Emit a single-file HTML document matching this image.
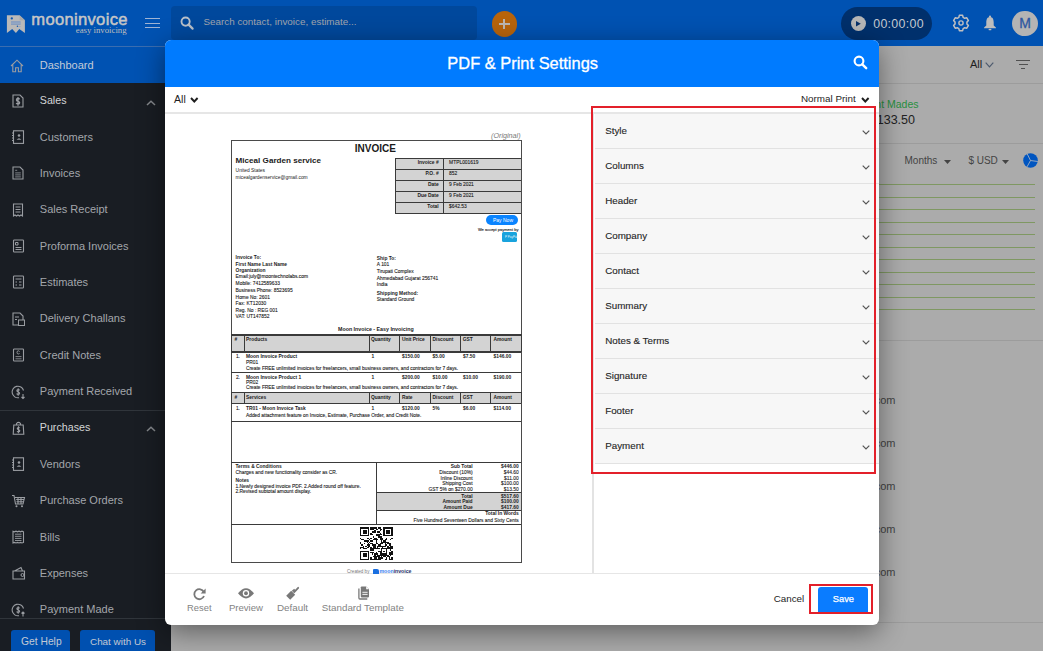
<!DOCTYPE html>
<html><head><meta charset="utf-8">
<title>PDF &amp; Print Settings</title>
<style>
*{box-sizing:border-box;margin:0;padding:0}
html,body{width:1043px;height:651px;overflow:hidden;background:#ababab;font-family:"Liberation Sans",sans-serif;position:relative}
.a{position:absolute}
.t{position:absolute;white-space:nowrap}
svg{position:absolute;overflow:visible}
</style></head><body>

<div class="a" style="left:0px;top:0px;width:1043px;height:46px;background:#0052b2;"></div>
<div class="a" style="left:0px;top:46px;width:171px;height:1px;background:#3a6db0;"></div>
<svg style="left:3px;top:10px" width="28" height="28" viewBox="0 0 28 28">
 <path d="M3.9 5.2 H16.6 L21.9 10.3 V23 L16.3 18.9 L12.9 23 L9.2 18.9 L3.9 23 Z" fill="#b9b9b9"/>
 <path d="M16.6 5.2 V10.3 H21.9 Z" fill="#a9a9a9"/>
 <circle cx="8.8" cy="8.4" r="1.15" fill="#0e56b0"/>
 <rect x="8" y="11.3" width="9.6" height="3.5" fill="#7e98c0"/>
 <rect x="8" y="12.6" width="9.6" height="0.9" fill="#a8b4c6"/>
 <circle cx="14.4" cy="16.3" r="0.7" fill="#0e56b0"/>
 <rect x="15.3" y="16.1" width="2.3" height="0.5" fill="#7e98c0"/>
</svg>
<div class="t" style="left:31.30px;top:9.26px;font-size:16.6px;line-height:21.58px;color:#c6c6c6;font-weight:normal;font-family:'Liberation Sans',sans-serif;-webkit-text-stroke:0.5px #c6c6c6;letter-spacing:0.3px">mooninvoice</div>
<div class="t" style="left:75.80px;top:24.88px;font-size:8.75px;line-height:11.38px;color:#bdbdbd;font-weight:normal;font-family:'Liberation Serif',serif;">easy invoicing</div>
<div class="a" style="left:145px;top:18.2px;width:15px;height:1.3px;background:#9fb4d4;"></div>
<div class="a" style="left:145px;top:22.7px;width:15px;height:1.3px;background:#9fb4d4;"></div>
<div class="a" style="left:145px;top:27.2px;width:15px;height:1.3px;background:#9fb4d4;"></div>
<div class="a" style="left:171px;top:6px;width:306px;height:34px;background:#00489c;border-radius:4px"></div>
<svg style="left:179.8px;top:16.4px" width="14" height="14" viewBox="0 0 14 14"><circle cx="5.6" cy="5.6" r="4.1" fill="none" stroke="#b9c0c9" stroke-width="1.9"/><path d="M8.6 8.6 L12.6 12.6" stroke="#b9c0c9" stroke-width="2.2" stroke-linecap="round"/></svg>
<div class="t" style="left:203.40px;top:16.43px;font-size:9.9px;line-height:12.87px;color:#a0a5ad;font-weight:normal;font-family:'Liberation Sans',sans-serif;">Search contact, invoice, estimate...</div>
<div class="a" style="left:491.6px;top:11.1px;width:25.4px;height:25.6px;border-radius:50%;background:#b8640b"></div>
<div class="a" style="left:499px;top:22.6px;width:10.8px;height:2.2px;background:#bcb6b0;"></div>
<div class="a" style="left:503.3px;top:18.5px;width:2.2px;height:10.5px;background:#bcb6b0;"></div>
<div class="a" style="left:840.5px;top:7px;width:91.5px;height:33px;border-radius:17px;background:#00306c"></div>
<div class="a" style="left:850.7px;top:16px;width:15px;height:15px;border-radius:50%;background:#b6b6b6"></div>
<svg style="left:856.4px;top:21.1px" width="5" height="5.4" viewBox="0 0 5 5.4"><path d="M0 0 L4.8 2.7 L0 5.4 Z" fill="#06306a"/></svg>
<div class="t" style="left:873.20px;top:16.04px;font-size:12.4px;line-height:16.12px;color:#c4c9d0;font-weight:normal;font-family:'Liberation Sans',sans-serif;letter-spacing:0.3px">00:00:00</div>
<svg style="left:952px;top:14px" width="18" height="18" viewBox="0 0 18 18"><path d="M6.79 3.42 L7.38 1.37 L10.62 1.37 L11.21 3.42 L12.73 4.30 L14.80 3.78 L16.42 6.59 L14.94 8.12 L14.94 9.88 L16.42 11.41 L14.80 14.22 L12.73 13.70 L11.21 14.58 L10.62 16.63 L7.38 16.63 L6.79 14.58 L5.27 13.70 L3.20 14.22 L1.58 11.41 L3.06 9.88 L3.06 8.12 L1.58 6.59 L3.20 3.78 L5.27 4.30Z" fill="none" stroke="#c0c0c2" stroke-width="1.5" stroke-linejoin="round"/><circle cx="9" cy="9" r="2.1" fill="none" stroke="#c0c0c2" stroke-width="1.4"/></svg>
<svg style="left:982.7px;top:15px" width="14" height="16" viewBox="0 0 14 16"><circle cx="7" cy="1.7" r="1.1" fill="#bdbdbd"/><path d="M7 1.9 C3.9 1.9 3.3 5 3.3 7.5 V10.6 L1.1 12.5 V13.2 H12.9 V12.5 L10.7 10.6 V7.5 C10.7 5 10.1 1.9 7 1.9Z" fill="#bdbdbd"/><ellipse cx="7" cy="14.5" rx="1.5" ry="0.85" fill="#bdbdbd"/></svg>
<div class="a" style="left:1012.3px;top:10.7px;width:25.6px;height:25.6px;border-radius:50%;background:#b4b4b4"></div>
<div class="t" style="left:1012px;top:15px;width:26px;text-align:center;font-size:14px;line-height:17px;color:#2f57a0;-webkit-text-stroke:0.3px #2f57a0">M</div>
<div class="a" style="left:0px;top:47px;width:171px;height:604px;background:#191d23;"></div>
<div class="a" style="left:0px;top:47px;width:171px;height:36px;background:#0052b2;"></div>
<div class="a" style="left:0px;top:410px;width:171px;height:1px;background:#30353b;"></div>
<div class="a" style="left:0px;top:618px;width:171px;height:1px;background:#30353b;"></div>
<div class="t" style="left:39.80px;top:58.04px;font-size:11px;line-height:14.30px;color:#c3cbd7;font-weight:normal;font-family:'Liberation Sans',sans-serif;">Dashboard</div>
<svg style="left:10.0px;top:58.5px" width="14" height="14" viewBox="0 0 14 14"><path d="M1 7 L7 1.2 L13 7 M2.8 5.5 V12.8 H5.6 V8.8 H8.4 V12.8 H11.2 V5.5" fill="none" stroke="#9a9da2" stroke-width="1.1" stroke="#c6ccd6"/></svg>
<div class="t" style="left:39.80px;top:93.84px;font-size:10.7px;line-height:13.91px;color:#d4d5d7;font-weight:normal;font-family:'Liberation Sans',sans-serif;">Sales</div>
<svg style="left:11.5px;top:94.0px" width="14" height="14" viewBox="0 0 14 14"><path d="M1 1 H8 L11 4 V13 H1 Z" fill="none" stroke="#9a9da2" stroke-width="1.1"/><path d="M7.58 5.38 Q7.31 4.50 6.00 4.50 Q4.42 4.50 4.42 5.90 Q4.42 6.95 6.00 7.30 Q7.66 7.65 7.66 8.79 Q7.66 10.10 6.00 10.10 Q4.60 10.10 4.25 9.05 M6.00 2.92 V11.68" fill="none" stroke="#9a9da2" stroke-width="1.3"/></svg>
<svg style="left:145.5px;top:99.5px" width="10" height="6" viewBox="0 0 10 6"><path d="M1 5 L5 1.2 L9 5" fill="none" stroke="#85888c" stroke-width="1.5"/></svg>
<div class="t" style="left:39.80px;top:129.54px;font-size:11px;line-height:14.30px;color:#a3a6ab;font-weight:normal;font-family:'Liberation Sans',sans-serif;">Customers</div>
<svg style="left:11.5px;top:130.0px" width="14" height="14" viewBox="0 0 14 14"><rect x="1.5" y="0.8" width="10" height="12.6" fill="none" stroke="#9a9da2" stroke-width="1.1"/><path d="M0 3 H2 M0 5.5 H2 M0 8 H2 M0 10.5 H2" stroke="#9a9da2" stroke-width="1"/><circle cx="7" cy="5.5" r="1.3" fill="#9a9da2"/><path d="M4.6 9.8 Q7 6.8 9.4 9.8Z" fill="#9a9da2"/></svg>
<div class="t" style="left:39.80px;top:165.91px;font-size:11px;line-height:14.30px;color:#a3a6ab;font-weight:normal;font-family:'Liberation Sans',sans-serif;">Invoices</div>
<svg style="left:11.5px;top:166.37px" width="14" height="14" viewBox="0 0 14 14"><path d="M1 1 H8 L11 4 V13 H1 Z" fill="none" stroke="#9a9da2" stroke-width="1.1"/><path d="M3.2 4.3 H5.2 M3.2 6.9 H8.8 M3.2 8.9 H8.8 M3.2 10.9 H8.8" stroke="#9a9da2" stroke-width="0.8"/></svg>
<div class="t" style="left:39.80px;top:202.28px;font-size:11px;line-height:14.30px;color:#a3a6ab;font-weight:normal;font-family:'Liberation Sans',sans-serif;">Sales Receipt</div>
<svg style="left:11.5px;top:202.74px" width="14" height="14" viewBox="0 0 14 14"><path d="M1.5 1 H10.5 V13 L9 12 L7.5 13 L6 12 L4.5 13 L3 12 L1.5 13 Z" fill="none" stroke="#9a9da2" stroke-width="1.1"/><path d="M3.5 4 H8.5 M3.5 6.5 H8.5 M3.5 9 H8.5" stroke="#9a9da2" stroke-width="1"/></svg>
<div class="t" style="left:39.80px;top:238.65px;font-size:11px;line-height:14.30px;color:#a3a6ab;font-weight:normal;font-family:'Liberation Sans',sans-serif;">Proforma Invoices</div>
<svg style="left:11.5px;top:239.10999999999999px" width="14" height="14" viewBox="0 0 14 14"><rect x="1.5" y="1" width="10" height="12" rx="0.8" fill="none" stroke="#9a9da2" stroke-width="1.1"/><path d="M3.5 3.5 H6 V6 H3.5Z M3.5 8.5 H9.5 M3.5 10.5 H9.5" stroke="#9a9da2" stroke-width="1" fill="none"/></svg>
<div class="t" style="left:39.80px;top:275.02px;font-size:11px;line-height:14.30px;color:#a3a6ab;font-weight:normal;font-family:'Liberation Sans',sans-serif;">Estimates</div>
<svg style="left:11.5px;top:275.48px" width="14" height="14" viewBox="0 0 14 14"><rect x="1.5" y="1" width="10" height="12" rx="0.8" fill="none" stroke="#9a9da2" stroke-width="1.1"/><path d="M3.5 4 H9.5 M3.5 7 H5 M7 7 H9.5 M3.5 10 H5 M7 10 H9.5" stroke="#9a9da2" stroke-width="1"/></svg>
<div class="t" style="left:39.80px;top:311.39px;font-size:11px;line-height:14.30px;color:#a3a6ab;font-weight:normal;font-family:'Liberation Sans',sans-serif;">Delivery Challans</div>
<svg style="left:11.5px;top:311.85px" width="14" height="14" viewBox="0 0 14 14"><path d="M1 1 H8 L11 4 V13 H1 Z" fill="none" stroke="#9a9da2" stroke-width="1.1"/><rect x="6.5" y="8" width="6" height="5.5" fill="#1a1e23" stroke="#9a9da2" stroke-width="1"/><path d="M3 5 H7 M3 7.5 H5" stroke="#9a9da2" stroke-width="1"/></svg>
<div class="t" style="left:39.80px;top:347.76px;font-size:11px;line-height:14.30px;color:#a3a6ab;font-weight:normal;font-family:'Liberation Sans',sans-serif;">Credit Notes</div>
<svg style="left:11.5px;top:348.21999999999997px" width="14" height="14" viewBox="0 0 14 14"><rect x="1.5" y="1" width="10" height="12" rx="0.8" fill="none" stroke="#9a9da2" stroke-width="1.1"/><path d="M7.6 3.6 Q7.2 2.8 6.4 2.8 Q5 2.8 5 4.4 Q5 6 6.4 6 Q7.2 6 7.6 5.2" fill="none" stroke="#9a9da2" stroke-width="0.9"/><path d="M3.5 8.6 H9.5 M3.5 10.8 H9.5" stroke="#9a9da2" stroke-width="0.8"/></svg>
<div class="t" style="left:39.80px;top:384.13px;font-size:11px;line-height:14.30px;color:#a3a6ab;font-weight:normal;font-family:'Liberation Sans',sans-serif;">Payment Received</div>
<svg style="left:11.5px;top:384.59px" width="14" height="14" viewBox="0 0 14 14"><path d="M11.5 5.5 A5.8 5.8 0 1 0 7 12.7" fill="none" stroke="#9a9da2" stroke-width="1.1"/><path d="M7.55 5.35 Q7.33 4.60 6.20 4.60 Q4.85 4.60 4.85 5.80 Q4.85 6.70 6.20 7.00 Q7.62 7.30 7.62 8.28 Q7.62 9.40 6.20 9.40 Q5.00 9.40 4.70 8.50 M6.20 3.25 V10.75" fill="none" stroke="#9a9da2" stroke-width="1.1"/><path d="M11 9 V13.5 M9.5 12 L11 13.5 L12.5 12" fill="none" stroke="#9a9da2" stroke-width="1.1"/></svg>
<div class="t" style="left:39.80px;top:420.80px;font-size:10.7px;line-height:13.91px;color:#d4d5d7;font-weight:normal;font-family:'Liberation Sans',sans-serif;">Purchases</div>
<svg style="left:11.5px;top:420.96px" width="14" height="14" viewBox="0 0 14 14"><path d="M1.8 4 H11.2 L11.8 13.2 H1.2 Z M4.5 4 V2.5 Q6.5 0.2 8.5 2.5 V4" fill="none" stroke="#9a9da2" stroke-width="1.1"/><path d="M7.74 7.19 Q7.53 6.50 6.50 6.50 Q5.26 6.50 5.26 7.60 Q5.26 8.42 6.50 8.70 Q7.81 8.97 7.81 9.87 Q7.81 10.90 6.50 10.90 Q5.40 10.90 5.12 10.07 M6.50 5.26 V12.14" fill="none" stroke="#9a9da2" stroke-width="1.1"/></svg>
<svg style="left:145.5px;top:426.46px" width="10" height="6" viewBox="0 0 10 6"><path d="M1 5 L5 1.2 L9 5" fill="none" stroke="#85888c" stroke-width="1.5"/></svg>
<div class="t" style="left:39.80px;top:456.87px;font-size:11px;line-height:14.30px;color:#a3a6ab;font-weight:normal;font-family:'Liberation Sans',sans-serif;">Vendors</div>
<svg style="left:11.5px;top:457.33px" width="14" height="14" viewBox="0 0 14 14"><rect x="1.5" y="0.8" width="10" height="12.6" fill="none" stroke="#9a9da2" stroke-width="1.1"/><path d="M0 3 H2 M0 5.5 H2 M0 8 H2 M0 10.5 H2" stroke="#9a9da2" stroke-width="1"/><circle cx="7" cy="5.5" r="1.3" fill="#9a9da2"/><path d="M4.6 9.8 Q7 6.8 9.4 9.8Z" fill="#9a9da2"/></svg>
<div class="t" style="left:39.80px;top:493.24px;font-size:11px;line-height:14.30px;color:#a3a6ab;font-weight:normal;font-family:'Liberation Sans',sans-serif;">Purchase Orders</div>
<svg style="left:11.5px;top:493.7px" width="14" height="14" viewBox="0 0 14 14"><path d="M0 1.5 H2 L3.5 10 H11 L12.5 3.5 H3 M4.2 5.5 H12 M4.5 7.8 H11.5 M6 3.5 V10 M9 3.5 V10" fill="none" stroke="#9a9da2" stroke-width="1.1"/><circle cx="4.5" cy="12.3" r="1" fill="#9a9da2"/><circle cx="10" cy="12.3" r="1" fill="#9a9da2"/></svg>
<div class="t" style="left:39.80px;top:529.61px;font-size:11px;line-height:14.30px;color:#a3a6ab;font-weight:normal;font-family:'Liberation Sans',sans-serif;">Bills</div>
<svg style="left:11.5px;top:530.0699999999999px" width="14" height="14" viewBox="0 0 14 14"><path d="M1 1.2 L2.5 1.8 L4 1.2 L5.5 1.8 L7 1.2 L8.5 1.8 L10 1.2 L11.5 1.8 V12.4 L10 13 L8.5 12.4 L7 13 L5.5 12.4 L4 13 L2.5 12.4 L1 13 Z" fill="none" stroke="#9a9da2" stroke-width="1.1"/><path d="M3 4.2 H9.5 M3 6.3 H9.5 M3 8.4 H9.5 M3 10.5 H9.5" stroke="#9a9da2" stroke-width="0.9"/></svg>
<div class="t" style="left:39.80px;top:565.98px;font-size:11px;line-height:14.30px;color:#a3a6ab;font-weight:normal;font-family:'Liberation Sans',sans-serif;">Expenses</div>
<svg style="left:11.5px;top:566.4399999999999px" width="14" height="14" viewBox="0 0 14 14"><path d="M1 5 H12.5 V13 H1 Z M2.5 5 L9 1.5 L10.5 5" fill="none" stroke="#9a9da2" stroke-width="1.1"/><circle cx="10.5" cy="9" r="1.5" fill="none" stroke="#9a9da2" stroke-width="1"/></svg>
<div class="t" style="left:39.80px;top:602.35px;font-size:11px;line-height:14.30px;color:#a3a6ab;font-weight:normal;font-family:'Liberation Sans',sans-serif;">Payment Made</div>
<svg style="left:11.5px;top:602.81px" width="14" height="14" viewBox="0 0 14 14"><path d="M11.5 5.5 A5.8 5.8 0 1 0 7 12.7" fill="none" stroke="#9a9da2" stroke-width="1.1"/><path d="M7.55 5.35 Q7.33 4.60 6.20 4.60 Q4.85 4.60 4.85 5.80 Q4.85 6.70 6.20 7.00 Q7.62 7.30 7.62 8.28 Q7.62 9.40 6.20 9.40 Q5.00 9.40 4.70 8.50 M6.20 3.25 V10.75" fill="none" stroke="#9a9da2" stroke-width="1.1"/><path d="M11 13.5 V9 M9.5 10.5 L11 9 L12.5 10.5" fill="none" stroke="#9a9da2" stroke-width="1.1"/></svg>
<div class="a" style="left:11px;top:629.6px;width:59px;height:30px;border-radius:3px;background:#0050b0"></div>
<div class="t" style="left:21.00px;top:635.14px;font-size:10.3px;line-height:13.39px;color:#c2c9d4;font-weight:normal;font-family:'Liberation Sans',sans-serif;">Get Help</div>
<div class="a" style="left:80.4px;top:629.6px;width:75px;height:30px;border-radius:3px;background:#0050b0"></div>
<div class="t" style="left:90.00px;top:635.53px;font-size:9.9px;line-height:12.87px;color:#c2c9d4;font-weight:normal;font-family:'Liberation Sans',sans-serif;">Chat with Us</div>
<div class="a" style="left:171px;top:83px;width:872px;height:1px;background:#9c9c9c;"></div>
<div class="t" style="left:970.00px;top:57.04px;font-size:11px;line-height:14.30px;color:#1e1e1e;font-weight:normal;font-family:'Liberation Sans',sans-serif;">All</div>
<svg style="left:985px;top:62px" width="9" height="6" viewBox="0 0 9 6"><path d="M0.7 0.7 L4.5 4.8 L8.3 0.7" fill="none" stroke="#4d5a6e" stroke-width="1.2"/></svg>
<div class="a" style="left:1016px;top:60px;width:14px;height:1.4px;background:#505050;"></div>
<div class="a" style="left:1018.5px;top:64px;width:9px;height:1.4px;background:#505050;"></div>
<div class="a" style="left:1021px;top:68px;width:4px;height:1.4px;background:#505050;"></div>
<div class="t" style="right:124.50px;top:97.74px;font-size:10.5px;line-height:13.65px;color:#28903f;font-weight:normal;">Payment Mades</div>
<div class="t" style="right:128.00px;top:112.14px;font-size:12.5px;line-height:16.25px;color:#222;font-weight:normal;">$ 5133.50</div>
<div class="a" style="left:171px;top:143px;width:872px;height:1px;background:#9c9c9c;"></div>
<div class="t" style="left:904.50px;top:153.84px;font-size:10px;line-height:13.00px;color:#444;font-weight:normal;font-family:'Liberation Sans',sans-serif;">Months</div>
<svg style="left:944px;top:159.5px" width="7" height="4" viewBox="0 0 7 4"><path d="M0 0 H7 L3.5 4Z" fill="#444"/></svg>
<div class="t" style="left:968.40px;top:153.84px;font-size:10px;line-height:13.00px;color:#444;font-weight:normal;font-family:'Liberation Sans',sans-serif;">$ USD</div>
<svg style="left:1002px;top:159.5px" width="7" height="4" viewBox="0 0 7 4"><path d="M0 0 H7 L3.5 4Z" fill="#444"/></svg>
<svg style="left:1022.7px;top:153.3px" width="15" height="15" viewBox="0 0 15 15"><circle cx="7.5" cy="7.5" r="7.3" fill="#0055c0"/><path d="M7.5 7.5 L4.2 0.9 M7.5 7.5 L14.8 8.5 M7.5 7.5 L4 13.9" stroke="#a4b0c2" stroke-width="0.9"/></svg>
<div class="a" style="left:171px;top:184.0px;width:864px;height:1px;background:#7f9862;"></div>
<div class="a" style="left:171px;top:196.5px;width:864px;height:1px;background:#7f9862;"></div>
<div class="a" style="left:171px;top:209.0px;width:864px;height:1px;background:#7f9862;"></div>
<div class="a" style="left:171px;top:221.5px;width:864px;height:1px;background:#7f9862;"></div>
<div class="a" style="left:171px;top:234.0px;width:864px;height:1px;background:#7f9862;"></div>
<div class="a" style="left:171px;top:246.5px;width:864px;height:1px;background:#7f9862;"></div>
<div class="a" style="left:171px;top:259.0px;width:864px;height:1px;background:#7f9862;"></div>
<div class="a" style="left:171px;top:271.5px;width:864px;height:1px;background:#7f9862;"></div>
<div class="a" style="left:171px;top:284.0px;width:864px;height:1px;background:#7f9862;"></div>
<div class="a" style="left:171px;top:296.5px;width:864px;height:1px;background:#7f9862;"></div>
<div class="a" style="left:171px;top:309.0px;width:864px;height:1px;background:#7f9862;"></div>
<div class="a" style="left:171px;top:340px;width:872px;height:1px;background:#9c9c9c;"></div>
<div class="t" style="right:147.50px;top:393.04px;font-size:11px;line-height:14.30px;color:#444444;font-weight:normal;">gmail.com</div>
<div class="t" style="right:147.50px;top:436.04px;font-size:11px;line-height:14.30px;color:#444444;font-weight:normal;">gmail.com</div>
<div class="t" style="right:147.50px;top:479.04px;font-size:11px;line-height:14.30px;color:#444444;font-weight:normal;">gmail.com</div>
<div class="t" style="right:147.50px;top:522.04px;font-size:11px;line-height:14.30px;color:#444444;font-weight:normal;">gmail.com</div>
<div class="t" style="right:147.50px;top:565.04px;font-size:11px;line-height:14.30px;color:#444444;font-weight:normal;">gmail.com</div>
<div class="a" style="left:171px;top:622px;width:872px;height:1px;background:#9c9c9c;"></div>
<div class="a" style="left:165px;top:40px;width:714px;height:585px;background:#fff;border-radius:6px;box-shadow:0 7px 28px rgba(0,0,0,.45)"></div>
<div class="a" style="left:165px;top:40px;width:714px;height:46.5px;background:#007bff;border-radius:6px 6px 0 0"></div>
<div class="t" style="left:447.30px;top:52.91px;font-size:16.45px;line-height:21.39px;color:#ffffff;font-weight:normal;font-family:'Liberation Sans',sans-serif;-webkit-text-stroke:0.3px #fff">PDF &amp; Print Settings</div>
<svg style="left:853px;top:55px" width="15" height="15" viewBox="0 0 15 15"><circle cx="6" cy="6" r="4.4" fill="none" stroke="#fff" stroke-width="2.1"/><path d="M9.3 9.3 L13.2 13.2" stroke="#fff" stroke-width="2.4" stroke-linecap="round"/></svg>
<div class="t" style="left:174.10px;top:92.74px;font-size:10.5px;line-height:13.65px;color:#1e1e1e;font-weight:normal;font-family:'Liberation Sans',sans-serif;">All</div>
<svg style="left:189.5px;top:96.5px" width="9" height="6" viewBox="0 0 9 6"><path d="M1 1 L4.3 4.5 L7.6 1" fill="none" stroke="#1e1e1e" stroke-width="1.9"/></svg>
<div class="t" style="left:801.00px;top:93.38px;font-size:9.85px;line-height:12.80px;color:#1e1e1e;font-weight:normal;font-family:'Liberation Sans',sans-serif;">Normal Print</div>
<svg style="left:860.5px;top:97px" width="9" height="6" viewBox="0 0 9 6"><path d="M1 1 L4.3 4.5 L7.6 1" fill="none" stroke="#1e1e1e" stroke-width="1.9"/></svg>
<div class="a" style="left:165px;top:112.3px;width:714px;height:1.5px;background:#e6e6e6;"></div>
<div class="a" style="left:592.2px;top:113px;width:1.5px;height:460px;background:#e3e3e3;"></div>
<div class="a" style="left:594.5px;top:113.5px;width:284.5px;height:34px;background:#f7f7f7;"></div>
<div class="a" style="left:594.5px;top:147.5px;width:284.5px;height:1.3px;background:#e2e2e2;"></div>
<div class="t" style="left:605.20px;top:124.73px;font-size:9.8px;line-height:12.74px;color:#262626;font-weight:normal;font-family:'Liberation Sans',sans-serif;-webkit-text-stroke:0.12px #262626">Style</div>
<svg style="left:862px;top:130.0px" width="8" height="5" viewBox="0 0 8 5"><path d="M0.7 0.7 L4 4 L7.3 0.7" fill="none" stroke="#555" stroke-width="1.2"/></svg>
<div class="a" style="left:594.5px;top:148.5px;width:284.5px;height:34px;background:#f7f7f7;"></div>
<div class="a" style="left:594.5px;top:182.5px;width:284.5px;height:1.3px;background:#e2e2e2;"></div>
<div class="t" style="left:605.20px;top:159.73px;font-size:9.8px;line-height:12.74px;color:#262626;font-weight:normal;font-family:'Liberation Sans',sans-serif;-webkit-text-stroke:0.12px #262626">Columns</div>
<svg style="left:862px;top:165.0px" width="8" height="5" viewBox="0 0 8 5"><path d="M0.7 0.7 L4 4 L7.3 0.7" fill="none" stroke="#555" stroke-width="1.2"/></svg>
<div class="a" style="left:594.5px;top:183.5px;width:284.5px;height:34px;background:#f7f7f7;"></div>
<div class="a" style="left:594.5px;top:217.5px;width:284.5px;height:1.3px;background:#e2e2e2;"></div>
<div class="t" style="left:605.20px;top:194.73px;font-size:9.8px;line-height:12.74px;color:#262626;font-weight:normal;font-family:'Liberation Sans',sans-serif;-webkit-text-stroke:0.12px #262626">Header</div>
<svg style="left:862px;top:200.0px" width="8" height="5" viewBox="0 0 8 5"><path d="M0.7 0.7 L4 4 L7.3 0.7" fill="none" stroke="#555" stroke-width="1.2"/></svg>
<div class="a" style="left:594.5px;top:218.5px;width:284.5px;height:34px;background:#f7f7f7;"></div>
<div class="a" style="left:594.5px;top:252.5px;width:284.5px;height:1.3px;background:#e2e2e2;"></div>
<div class="t" style="left:605.20px;top:229.73px;font-size:9.8px;line-height:12.74px;color:#262626;font-weight:normal;font-family:'Liberation Sans',sans-serif;-webkit-text-stroke:0.12px #262626">Company</div>
<svg style="left:862px;top:235.0px" width="8" height="5" viewBox="0 0 8 5"><path d="M0.7 0.7 L4 4 L7.3 0.7" fill="none" stroke="#555" stroke-width="1.2"/></svg>
<div class="a" style="left:594.5px;top:253.5px;width:284.5px;height:34px;background:#f7f7f7;"></div>
<div class="a" style="left:594.5px;top:287.5px;width:284.5px;height:1.3px;background:#e2e2e2;"></div>
<div class="t" style="left:605.20px;top:264.73px;font-size:9.8px;line-height:12.74px;color:#262626;font-weight:normal;font-family:'Liberation Sans',sans-serif;-webkit-text-stroke:0.12px #262626">Contact</div>
<svg style="left:862px;top:270.0px" width="8" height="5" viewBox="0 0 8 5"><path d="M0.7 0.7 L4 4 L7.3 0.7" fill="none" stroke="#555" stroke-width="1.2"/></svg>
<div class="a" style="left:594.5px;top:288.5px;width:284.5px;height:34px;background:#f7f7f7;"></div>
<div class="a" style="left:594.5px;top:322.5px;width:284.5px;height:1.3px;background:#e2e2e2;"></div>
<div class="t" style="left:605.20px;top:299.73px;font-size:9.8px;line-height:12.74px;color:#262626;font-weight:normal;font-family:'Liberation Sans',sans-serif;-webkit-text-stroke:0.12px #262626">Summary</div>
<svg style="left:862px;top:305.0px" width="8" height="5" viewBox="0 0 8 5"><path d="M0.7 0.7 L4 4 L7.3 0.7" fill="none" stroke="#555" stroke-width="1.2"/></svg>
<div class="a" style="left:594.5px;top:323.5px;width:284.5px;height:34px;background:#f7f7f7;"></div>
<div class="a" style="left:594.5px;top:357.5px;width:284.5px;height:1.3px;background:#e2e2e2;"></div>
<div class="t" style="left:605.20px;top:334.73px;font-size:9.8px;line-height:12.74px;color:#262626;font-weight:normal;font-family:'Liberation Sans',sans-serif;-webkit-text-stroke:0.12px #262626">Notes &amp; Terms</div>
<svg style="left:862px;top:340.0px" width="8" height="5" viewBox="0 0 8 5"><path d="M0.7 0.7 L4 4 L7.3 0.7" fill="none" stroke="#555" stroke-width="1.2"/></svg>
<div class="a" style="left:594.5px;top:358.5px;width:284.5px;height:34px;background:#f7f7f7;"></div>
<div class="a" style="left:594.5px;top:392.5px;width:284.5px;height:1.3px;background:#e2e2e2;"></div>
<div class="t" style="left:605.20px;top:369.73px;font-size:9.8px;line-height:12.74px;color:#262626;font-weight:normal;font-family:'Liberation Sans',sans-serif;-webkit-text-stroke:0.12px #262626">Signature</div>
<svg style="left:862px;top:375.0px" width="8" height="5" viewBox="0 0 8 5"><path d="M0.7 0.7 L4 4 L7.3 0.7" fill="none" stroke="#555" stroke-width="1.2"/></svg>
<div class="a" style="left:594.5px;top:393.5px;width:284.5px;height:34px;background:#f7f7f7;"></div>
<div class="a" style="left:594.5px;top:427.5px;width:284.5px;height:1.3px;background:#e2e2e2;"></div>
<div class="t" style="left:605.20px;top:404.73px;font-size:9.8px;line-height:12.74px;color:#262626;font-weight:normal;font-family:'Liberation Sans',sans-serif;-webkit-text-stroke:0.12px #262626">Footer</div>
<svg style="left:862px;top:410.0px" width="8" height="5" viewBox="0 0 8 5"><path d="M0.7 0.7 L4 4 L7.3 0.7" fill="none" stroke="#555" stroke-width="1.2"/></svg>
<div class="a" style="left:594.5px;top:428.5px;width:284.5px;height:34px;background:#f7f7f7;"></div>
<div class="a" style="left:594.5px;top:462.5px;width:284.5px;height:1.3px;background:#e2e2e2;"></div>
<div class="t" style="left:605.20px;top:439.73px;font-size:9.8px;line-height:12.74px;color:#262626;font-weight:normal;font-family:'Liberation Sans',sans-serif;-webkit-text-stroke:0.12px #262626">Payment</div>
<svg style="left:862px;top:445.0px" width="8" height="5" viewBox="0 0 8 5"><path d="M0.7 0.7 L4 4 L7.3 0.7" fill="none" stroke="#555" stroke-width="1.2"/></svg>
<div class="a" style="left:590.8px;top:106.3px;width:285.5px;height:368px;border:2px solid #e3202a"></div>
<div class="a" style="left:165px;top:572.8px;width:714px;height:1.3px;background:#e6e6e6;"></div>
<svg style="left:192.5px;top:587.5px" width="13" height="12" viewBox="0 0 13 12"><path d="M10.8 4 A5 5 0 1 0 11 8" fill="none" stroke="#787878" stroke-width="1.8"/><path d="M12.6 0.5 V5.5 H7.6 Z" fill="#787878"/></svg>
<div class="t" style="left:187.10px;top:601.63px;font-size:9.4px;line-height:12.22px;color:#838383;font-weight:normal;font-family:'Liberation Sans',sans-serif;">Reset</div>
<svg style="left:238px;top:588px" width="16" height="11" viewBox="0 0 16 11"><path d="M0 5.25 Q8 -5 16 5.25 Q8 15.5 0 5.25Z" fill="#787878"/><circle cx="8" cy="5.25" r="3.2" fill="#fff"/><circle cx="8" cy="5.25" r="1.9" fill="#787878"/></svg>
<div class="t" style="left:228.90px;top:602.03px;font-size:9.6px;line-height:12.48px;color:#838383;font-weight:normal;font-family:'Liberation Sans',sans-serif;">Preview</div>
<svg style="left:285.8px;top:586.5px" width="13" height="13" viewBox="0 0 13 13"><path d="M12.2 0.8 L8.2 5.2" stroke="#787878" stroke-width="1.8" stroke-linecap="round"/><path d="M5.2 3.8 L9.2 7.8 L4.2 12.8 L0.2 8.8 Z" fill="#787878"/><path d="M6.5 4.5 L8.8 2.5" stroke="#787878" stroke-width="2"/></svg>
<div class="t" style="left:276.90px;top:601.78px;font-size:9.85px;line-height:12.80px;color:#838383;font-weight:normal;font-family:'Liberation Sans',sans-serif;">Default</div>
<svg style="left:357.8px;top:586px" width="12" height="14" viewBox="0 0 12 14"><path d="M0.9 2.6 V12 Q0.9 13 1.9 13 H9.3" fill="none" stroke="#787878" stroke-width="1.3"/><path d="M3.6 0.4 H8.2 L11 3.2 V10.6 Q11 11.4 10.2 11.4 H3.6 Q2.8 11.4 2.8 10.6 V1.2 Q2.8 0.4 3.6 0.4 Z" fill="#787878"/><path d="M8.2 0.6 V3.2 H10.8" fill="#fff"/><path d="M4.4 6.3 H9.6 M4.4 8.4 H9.6" stroke="#fff" stroke-width="0.9"/></svg>
<div class="t" style="left:321.80px;top:601.83px;font-size:9.8px;line-height:12.74px;color:#838383;font-weight:normal;font-family:'Liberation Sans',sans-serif;">Standard Template</div>
<div class="t" style="left:773.70px;top:592.83px;font-size:9.8px;line-height:12.74px;color:#222;font-weight:normal;font-family:'Liberation Sans',sans-serif;">Cancel</div>
<div class="a" style="left:818.2px;top:586.8px;width:49.8px;height:25px;background:#0a7cff;border-radius:3px 3px 0 0"></div>
<div class="a" style="left:808.8px;top:583.6px;width:64.5px;height:30px;border:2px solid #e3202a"></div>
<div class="t" style="left:832.80px;top:593.33px;font-size:9.3px;line-height:12.09px;color:#ffffff;font-weight:normal;font-family:'Liberation Sans',sans-serif;-webkit-text-stroke:0.25px #fff">Save</div>
<div class="a" style="left:231px;top:140px;width:290.5px;height:423px;border:1.2px solid #4a4a4a"></div>
<div class="t" style="right:522.40px;top:130.62px;font-size:7.2px;line-height:9.36px;color:#7a7a7a;font-weight:normal;font-style:italic">(Original)</div>
<div class="t" style="left:354.80px;top:142.23px;font-size:10px;line-height:13.00px;color:#1a1a1a;font-weight:bold;font-family:'Liberation Sans',sans-serif;">INVOICE</div>
<div class="t" style="left:235.60px;top:155.73px;font-size:8.1px;line-height:10.53px;color:#1a1a1a;font-weight:bold;font-family:'Liberation Sans',sans-serif;">Miceal Garden service</div>
<div class="t" style="left:235.60px;top:168.12px;font-size:4.9px;line-height:6.37px;color:#1a1a1a;font-weight:normal;font-family:'Liberation Sans',sans-serif;">United States</div>
<div class="t" style="left:235.60px;top:174.62px;font-size:4.9px;line-height:6.37px;color:#1a1a1a;font-weight:normal;font-family:'Liberation Sans',sans-serif;">micealgardenservice@gmail.com</div>
<div class="a" style="left:395.3px;top:157.5px;width:125.7px;height:55px;background:#d3d3d3;"></div>
<div class="a" style="left:395.3px;top:157.5px;width:125.69999999999999px;height:1.1px;background:#3a3a3a;"></div>
<div class="a" style="left:395.3px;top:168.5px;width:125.69999999999999px;height:1.1px;background:#3a3a3a;"></div>
<div class="a" style="left:395.3px;top:179.5px;width:125.69999999999999px;height:1.1px;background:#3a3a3a;"></div>
<div class="a" style="left:395.3px;top:190.5px;width:125.69999999999999px;height:1.1px;background:#3a3a3a;"></div>
<div class="a" style="left:395.3px;top:201.5px;width:125.69999999999999px;height:1.1px;background:#3a3a3a;"></div>
<div class="a" style="left:395.3px;top:212.5px;width:125.69999999999999px;height:1.1px;background:#3a3a3a;"></div>
<div class="a" style="left:395.3px;top:157.5px;width:1.1px;height:55.099999999999994px;background:#3a3a3a;"></div>
<div class="a" style="left:443px;top:157.5px;width:1.1px;height:55.099999999999994px;background:#3a3a3a;"></div>
<div class="t" style="right:604.40px;top:160.38px;font-size:4.9px;line-height:6.37px;color:#1a1a1a;font-weight:bold;">Invoice #</div>
<div class="t" style="left:449.10px;top:160.38px;font-size:4.9px;line-height:6.37px;color:#1a1a1a;font-weight:normal;font-family:'Liberation Sans',sans-serif;;-webkit-text-stroke:0.1px #1a1a1a">MTPL001619</div>
<div class="t" style="right:604.40px;top:171.38px;font-size:4.9px;line-height:6.37px;color:#1a1a1a;font-weight:bold;">P.O. #</div>
<div class="t" style="left:449.10px;top:171.38px;font-size:4.9px;line-height:6.37px;color:#1a1a1a;font-weight:normal;font-family:'Liberation Sans',sans-serif;;-webkit-text-stroke:0.1px #1a1a1a">852</div>
<div class="t" style="right:604.40px;top:182.38px;font-size:4.9px;line-height:6.37px;color:#1a1a1a;font-weight:bold;">Date</div>
<div class="t" style="left:449.10px;top:182.38px;font-size:4.9px;line-height:6.37px;color:#1a1a1a;font-weight:normal;font-family:'Liberation Sans',sans-serif;;-webkit-text-stroke:0.1px #1a1a1a">9 Feb 2021</div>
<div class="t" style="right:604.40px;top:193.38px;font-size:4.9px;line-height:6.37px;color:#1a1a1a;font-weight:bold;">Due Date</div>
<div class="t" style="left:449.10px;top:193.38px;font-size:4.9px;line-height:6.37px;color:#1a1a1a;font-weight:normal;font-family:'Liberation Sans',sans-serif;;-webkit-text-stroke:0.1px #1a1a1a">9 Feb 2021</div>
<div class="t" style="right:604.40px;top:204.38px;font-size:4.9px;line-height:6.37px;color:#1a1a1a;font-weight:bold;">Total</div>
<div class="t" style="left:449.10px;top:204.38px;font-size:4.9px;line-height:6.37px;color:#1a1a1a;font-weight:normal;font-family:'Liberation Sans',sans-serif;;-webkit-text-stroke:0.1px #1a1a1a">$642.53</div>
<div class="a" style="left:485.7px;top:215.2px;width:32.8px;height:9.6px;border-radius:5px;background:#0a84ff"></div>
<div class="t" style="left:493.00px;top:217.42px;font-size:5px;line-height:6.50px;color:#fff;font-weight:normal;font-family:'Liberation Sans',sans-serif;">Pay Now</div>
<div class="t" style="right:524.50px;top:226.75px;font-size:4px;line-height:5.20px;color:#1a1a1a;font-weight:normal;;-webkit-text-stroke:0.1px #1a1a1a">We accept payment by</div>
<div class="a" style="left:502.3px;top:232.2px;width:14.7px;height:10.3px;border-radius:1.5px;background:#19a3dd"></div>
<div class="t" style="left:505.00px;top:235.99px;font-size:3px;line-height:3.90px;color:#e6f4fb;font-weight:normal;font-family:'Liberation Sans',sans-serif;">P PayPal</div>
<div class="t" style="left:235.60px;top:254.88px;font-size:4.9px;line-height:6.37px;color:#1a1a1a;font-weight:bold;font-family:'Liberation Sans',sans-serif;">Invoice To:</div>
<div class="t" style="left:235.60px;top:261.58px;font-size:4.9px;line-height:6.37px;color:#1a1a1a;font-weight:bold;font-family:'Liberation Sans',sans-serif;">First Name Last Name</div>
<div class="t" style="left:235.60px;top:267.78px;font-size:4.9px;line-height:6.37px;color:#1a1a1a;font-weight:bold;font-family:'Liberation Sans',sans-serif;">Organization</div>
<div class="t" style="left:235.60px;top:274.48px;font-size:4.9px;line-height:6.37px;color:#1a1a1a;font-weight:normal;font-family:'Liberation Sans',sans-serif;;-webkit-text-stroke:0.1px #1a1a1a">Email:july@moontechnolabs.com</div>
<div class="t" style="left:235.60px;top:280.88px;font-size:4.9px;line-height:6.37px;color:#1a1a1a;font-weight:normal;font-family:'Liberation Sans',sans-serif;;-webkit-text-stroke:0.1px #1a1a1a">Mobile: 7412589633</div>
<div class="t" style="left:235.60px;top:288.38px;font-size:4.9px;line-height:6.37px;color:#1a1a1a;font-weight:normal;font-family:'Liberation Sans',sans-serif;;-webkit-text-stroke:0.1px #1a1a1a">Business Phone: 8523695</div>
<div class="t" style="left:235.60px;top:294.78px;font-size:4.9px;line-height:6.37px;color:#1a1a1a;font-weight:normal;font-family:'Liberation Sans',sans-serif;;-webkit-text-stroke:0.1px #1a1a1a">Home No: 2601</div>
<div class="t" style="left:235.60px;top:301.18px;font-size:4.9px;line-height:6.37px;color:#1a1a1a;font-weight:normal;font-family:'Liberation Sans',sans-serif;;-webkit-text-stroke:0.1px #1a1a1a">Fax: KT12030</div>
<div class="t" style="left:235.60px;top:307.88px;font-size:4.9px;line-height:6.37px;color:#1a1a1a;font-weight:normal;font-family:'Liberation Sans',sans-serif;;-webkit-text-stroke:0.1px #1a1a1a">Reg. No  : REG 001</div>
<div class="t" style="left:235.60px;top:314.48px;font-size:4.9px;line-height:6.37px;color:#1a1a1a;font-weight:normal;font-family:'Liberation Sans',sans-serif;;-webkit-text-stroke:0.1px #1a1a1a">VAT: UT147852</div>
<div class="t" style="left:376.80px;top:255.58px;font-size:4.9px;line-height:6.37px;color:#1a1a1a;font-weight:bold;font-family:'Liberation Sans',sans-serif;">Ship To:</div>
<div class="t" style="left:376.80px;top:262.38px;font-size:4.9px;line-height:6.37px;color:#1a1a1a;font-weight:normal;font-family:'Liberation Sans',sans-serif;;-webkit-text-stroke:0.1px #1a1a1a">A 101</div>
<div class="t" style="left:376.80px;top:269.48px;font-size:4.9px;line-height:6.37px;color:#1a1a1a;font-weight:normal;font-family:'Liberation Sans',sans-serif;;-webkit-text-stroke:0.1px #1a1a1a">Tirupati Complex</div>
<div class="t" style="left:376.80px;top:275.98px;font-size:4.9px;line-height:6.37px;color:#1a1a1a;font-weight:normal;font-family:'Liberation Sans',sans-serif;;-webkit-text-stroke:0.1px #1a1a1a">Ahmedabad Gujarat 256741</div>
<div class="t" style="left:376.80px;top:282.48px;font-size:4.9px;line-height:6.37px;color:#1a1a1a;font-weight:normal;font-family:'Liberation Sans',sans-serif;;-webkit-text-stroke:0.1px #1a1a1a">India</div>
<div class="t" style="left:376.80px;top:290.58px;font-size:4.9px;line-height:6.37px;color:#1a1a1a;font-weight:bold;font-family:'Liberation Sans',sans-serif;">Shipping Method:</div>
<div class="t" style="left:376.80px;top:297.38px;font-size:4.9px;line-height:6.37px;color:#1a1a1a;font-weight:normal;font-family:'Liberation Sans',sans-serif;;-webkit-text-stroke:0.1px #1a1a1a">Standard Ground</div>
<div class="t" style="left:338.00px;top:326.13px;font-size:5.3px;line-height:6.89px;color:#1a1a1a;font-weight:bold;font-family:'Liberation Sans',sans-serif;">Moon Invoice - Easy Invoicing</div>
<div class="a" style="left:231px;top:334.4px;width:290px;height:17.2px;background:#d3d3d3;"></div>
<div class="a" style="left:231px;top:334.4px;width:290px;height:1.2px;background:#3a3a3a;"></div>
<div class="a" style="left:231px;top:351.4px;width:290px;height:1.2px;background:#3a3a3a;"></div>
<div class="a" style="left:231px;top:334.4px;width:1.1px;height:17.200000000000045px;background:#3a3a3a;"></div>
<div class="a" style="left:243.8px;top:334.4px;width:1.1px;height:17.200000000000045px;background:#3a3a3a;"></div>
<div class="a" style="left:368.6px;top:334.4px;width:1.1px;height:17.200000000000045px;background:#3a3a3a;"></div>
<div class="a" style="left:399.2px;top:334.4px;width:1.1px;height:17.200000000000045px;background:#3a3a3a;"></div>
<div class="a" style="left:429.8px;top:334.4px;width:1.1px;height:17.200000000000045px;background:#3a3a3a;"></div>
<div class="a" style="left:460.1px;top:334.4px;width:1.1px;height:17.200000000000045px;background:#3a3a3a;"></div>
<div class="a" style="left:490.4px;top:334.4px;width:1.1px;height:17.200000000000045px;background:#3a3a3a;"></div>
<div class="a" style="left:521px;top:334.4px;width:1.1px;height:17.200000000000045px;background:#3a3a3a;"></div>
<div class="t" style="left:234.50px;top:337.28px;font-size:4.9px;line-height:6.37px;color:#1a1a1a;font-weight:bold;font-family:'Liberation Sans',sans-serif;">#</div>
<div class="t" style="left:246.00px;top:337.28px;font-size:4.9px;line-height:6.37px;color:#1a1a1a;font-weight:bold;font-family:'Liberation Sans',sans-serif;">Products</div>
<div class="t" style="left:371.00px;top:337.28px;font-size:4.9px;line-height:6.37px;color:#1a1a1a;font-weight:bold;font-family:'Liberation Sans',sans-serif;">Quantity</div>
<div class="t" style="left:401.90px;top:337.28px;font-size:4.9px;line-height:6.37px;color:#1a1a1a;font-weight:bold;font-family:'Liberation Sans',sans-serif;">Unit Price</div>
<div class="t" style="left:432.50px;top:337.28px;font-size:4.9px;line-height:6.37px;color:#1a1a1a;font-weight:bold;font-family:'Liberation Sans',sans-serif;">Discount</div>
<div class="t" style="left:462.80px;top:337.28px;font-size:4.9px;line-height:6.37px;color:#1a1a1a;font-weight:bold;font-family:'Liberation Sans',sans-serif;">GST</div>
<div class="t" style="left:493.40px;top:337.28px;font-size:4.9px;line-height:6.37px;color:#1a1a1a;font-weight:bold;font-family:'Liberation Sans',sans-serif;">Amount</div>
<div class="t" style="left:235.90px;top:354.18px;font-size:4.9px;line-height:6.37px;color:#1a1a1a;font-weight:normal;font-family:'Liberation Sans',sans-serif;;-webkit-text-stroke:0.1px #1a1a1a">1.</div>
<div class="t" style="left:246.00px;top:354.18px;font-size:4.9px;line-height:6.37px;color:#1a1a1a;font-weight:bold;font-family:'Liberation Sans',sans-serif;">Moon Invoice Product</div>
<div class="t" style="left:371.50px;top:354.18px;font-size:4.9px;line-height:6.37px;color:#1a1a1a;font-weight:bold;font-family:'Liberation Sans',sans-serif;">1</div>
<div class="t" style="left:402.00px;top:354.18px;font-size:4.9px;line-height:6.37px;color:#1a1a1a;font-weight:bold;font-family:'Liberation Sans',sans-serif;">$150.00</div>
<div class="t" style="left:432.50px;top:354.18px;font-size:4.9px;line-height:6.37px;color:#1a1a1a;font-weight:bold;font-family:'Liberation Sans',sans-serif;">$5.00</div>
<div class="t" style="left:463.00px;top:354.18px;font-size:4.9px;line-height:6.37px;color:#1a1a1a;font-weight:bold;font-family:'Liberation Sans',sans-serif;">$7.50</div>
<div class="t" style="left:493.50px;top:354.18px;font-size:4.9px;line-height:6.37px;color:#1a1a1a;font-weight:bold;font-family:'Liberation Sans',sans-serif;">$146.00</div>
<div class="t" style="left:246.00px;top:359.88px;font-size:4.9px;line-height:6.37px;color:#1a1a1a;font-weight:normal;font-family:'Liberation Sans',sans-serif;;-webkit-text-stroke:0.1px #1a1a1a">PR01</div>
<div class="t" style="left:246.00px;top:365.71px;font-size:4.85px;line-height:6.30px;color:#1a1a1a;font-weight:normal;font-family:'Liberation Sans',sans-serif;;-webkit-text-stroke:0.1px #1a1a1a">Create FREE unlimited invoices for freelancers, small business owners, and contractors for 7 days.</div>
<div class="a" style="left:231px;top:372px;width:290px;height:1.1px;background:#3a3a3a;"></div>
<div class="t" style="left:235.90px;top:374.58px;font-size:4.9px;line-height:6.37px;color:#1a1a1a;font-weight:normal;font-family:'Liberation Sans',sans-serif;;-webkit-text-stroke:0.1px #1a1a1a">2.</div>
<div class="t" style="left:246.00px;top:374.58px;font-size:4.9px;line-height:6.37px;color:#1a1a1a;font-weight:bold;font-family:'Liberation Sans',sans-serif;">Moon Invoice Product 1</div>
<div class="t" style="left:371.50px;top:374.58px;font-size:4.9px;line-height:6.37px;color:#1a1a1a;font-weight:bold;font-family:'Liberation Sans',sans-serif;">1</div>
<div class="t" style="left:402.00px;top:374.58px;font-size:4.9px;line-height:6.37px;color:#1a1a1a;font-weight:bold;font-family:'Liberation Sans',sans-serif;">$200.00</div>
<div class="t" style="left:432.50px;top:374.58px;font-size:4.9px;line-height:6.37px;color:#1a1a1a;font-weight:bold;font-family:'Liberation Sans',sans-serif;">$10.00</div>
<div class="t" style="left:463.00px;top:374.58px;font-size:4.9px;line-height:6.37px;color:#1a1a1a;font-weight:bold;font-family:'Liberation Sans',sans-serif;">$10.00</div>
<div class="t" style="left:493.50px;top:374.58px;font-size:4.9px;line-height:6.37px;color:#1a1a1a;font-weight:bold;font-family:'Liberation Sans',sans-serif;">$190.00</div>
<div class="t" style="left:246.00px;top:379.78px;font-size:4.9px;line-height:6.37px;color:#1a1a1a;font-weight:normal;font-family:'Liberation Sans',sans-serif;;-webkit-text-stroke:0.1px #1a1a1a">PR02</div>
<div class="t" style="left:246.00px;top:385.11px;font-size:4.85px;line-height:6.30px;color:#1a1a1a;font-weight:normal;font-family:'Liberation Sans',sans-serif;;-webkit-text-stroke:0.1px #1a1a1a">Create FREE unlimited invoices for freelancers, small business owners, and contractors for 7 days.</div>
<div class="a" style="left:231px;top:392px;width:290px;height:10.8px;background:#d3d3d3;"></div>
<div class="a" style="left:231px;top:391.8px;width:290px;height:1.2px;background:#3a3a3a;"></div>
<div class="a" style="left:231px;top:402.6px;width:290px;height:1.2px;background:#3a3a3a;"></div>
<div class="a" style="left:231px;top:392px;width:1.1px;height:10.800000000000011px;background:#3a3a3a;"></div>
<div class="a" style="left:243.8px;top:392px;width:1.1px;height:10.800000000000011px;background:#3a3a3a;"></div>
<div class="a" style="left:368.6px;top:392px;width:1.1px;height:10.800000000000011px;background:#3a3a3a;"></div>
<div class="a" style="left:399.2px;top:392px;width:1.1px;height:10.800000000000011px;background:#3a3a3a;"></div>
<div class="a" style="left:429.8px;top:392px;width:1.1px;height:10.800000000000011px;background:#3a3a3a;"></div>
<div class="a" style="left:460.1px;top:392px;width:1.1px;height:10.800000000000011px;background:#3a3a3a;"></div>
<div class="a" style="left:490.4px;top:392px;width:1.1px;height:10.800000000000011px;background:#3a3a3a;"></div>
<div class="a" style="left:521px;top:392px;width:1.1px;height:10.800000000000011px;background:#3a3a3a;"></div>
<div class="t" style="left:234.50px;top:395.18px;font-size:4.9px;line-height:6.37px;color:#1a1a1a;font-weight:bold;font-family:'Liberation Sans',sans-serif;">#</div>
<div class="t" style="left:246.00px;top:395.18px;font-size:4.9px;line-height:6.37px;color:#1a1a1a;font-weight:bold;font-family:'Liberation Sans',sans-serif;">Services</div>
<div class="t" style="left:371.00px;top:395.18px;font-size:4.9px;line-height:6.37px;color:#1a1a1a;font-weight:bold;font-family:'Liberation Sans',sans-serif;">Quantity</div>
<div class="t" style="left:401.90px;top:395.18px;font-size:4.9px;line-height:6.37px;color:#1a1a1a;font-weight:bold;font-family:'Liberation Sans',sans-serif;">Rate</div>
<div class="t" style="left:432.50px;top:395.18px;font-size:4.9px;line-height:6.37px;color:#1a1a1a;font-weight:bold;font-family:'Liberation Sans',sans-serif;">Discount</div>
<div class="t" style="left:462.80px;top:395.18px;font-size:4.9px;line-height:6.37px;color:#1a1a1a;font-weight:bold;font-family:'Liberation Sans',sans-serif;">GST</div>
<div class="t" style="left:493.40px;top:395.18px;font-size:4.9px;line-height:6.37px;color:#1a1a1a;font-weight:bold;font-family:'Liberation Sans',sans-serif;">Amount</div>
<div class="t" style="left:235.90px;top:405.68px;font-size:4.9px;line-height:6.37px;color:#1a1a1a;font-weight:normal;font-family:'Liberation Sans',sans-serif;;-webkit-text-stroke:0.1px #1a1a1a">1.</div>
<div class="t" style="left:246.00px;top:405.68px;font-size:4.9px;line-height:6.37px;color:#1a1a1a;font-weight:bold;font-family:'Liberation Sans',sans-serif;">TR01 - Moon Invoice Task</div>
<div class="t" style="left:371.50px;top:405.68px;font-size:4.9px;line-height:6.37px;color:#1a1a1a;font-weight:bold;font-family:'Liberation Sans',sans-serif;">1</div>
<div class="t" style="left:402.00px;top:405.68px;font-size:4.9px;line-height:6.37px;color:#1a1a1a;font-weight:bold;font-family:'Liberation Sans',sans-serif;">$120.00</div>
<div class="t" style="left:432.50px;top:405.68px;font-size:4.9px;line-height:6.37px;color:#1a1a1a;font-weight:bold;font-family:'Liberation Sans',sans-serif;">5%</div>
<div class="t" style="left:463.00px;top:405.68px;font-size:4.9px;line-height:6.37px;color:#1a1a1a;font-weight:bold;font-family:'Liberation Sans',sans-serif;">$6.00</div>
<div class="t" style="left:493.50px;top:405.68px;font-size:4.9px;line-height:6.37px;color:#1a1a1a;font-weight:bold;font-family:'Liberation Sans',sans-serif;">$114.00</div>
<div class="t" style="left:246.00px;top:413.11px;font-size:4.85px;line-height:6.30px;color:#1a1a1a;font-weight:normal;font-family:'Liberation Sans',sans-serif;;-webkit-text-stroke:0.1px #1a1a1a">Added attachment feature on Invoice, Estimate, Purchase Order, and Credit Note.</div>
<div class="a" style="left:231px;top:420.5px;width:290px;height:1.1px;background:#3a3a3a;"></div>
<div class="a" style="left:231px;top:462.2px;width:290px;height:1.2px;background:#3a3a3a;"></div>
<div class="a" style="left:376px;top:462.2px;width:1.2px;height:61.80000000000001px;background:#3a3a3a;"></div>
<div class="a" style="left:377px;top:491.8px;width:144px;height:18.2px;background:#d3d3d3;"></div>
<div class="a" style="left:376px;top:491.6px;width:145px;height:1.1px;background:#3a3a3a;"></div>
<div class="a" style="left:376px;top:509.8px;width:145px;height:1.1px;background:#3a3a3a;"></div>
<div class="a" style="left:231px;top:523.8px;width:290px;height:1.2px;background:#3a3a3a;"></div>
<div class="t" style="left:235.50px;top:464.18px;font-size:4.9px;line-height:6.37px;color:#1a1a1a;font-weight:bold;font-family:'Liberation Sans',sans-serif;">Terms &amp; Conditions</div>
<div class="t" style="left:235.50px;top:470.08px;font-size:4.9px;line-height:6.37px;color:#1a1a1a;font-weight:normal;font-family:'Liberation Sans',sans-serif;;-webkit-text-stroke:0.1px #1a1a1a">Charges and new functionality consider as CR.</div>
<div class="t" style="left:235.50px;top:478.48px;font-size:4.9px;line-height:6.37px;color:#1a1a1a;font-weight:bold;font-family:'Liberation Sans',sans-serif;">Notes</div>
<div class="t" style="left:235.50px;top:484.38px;font-size:4.9px;line-height:6.37px;color:#1a1a1a;font-weight:normal;font-family:'Liberation Sans',sans-serif;;-webkit-text-stroke:0.1px #1a1a1a">1.Newly designed invoice PDF.  2.Added round off feature.</div>
<div class="t" style="left:235.50px;top:489.38px;font-size:4.9px;line-height:6.37px;color:#1a1a1a;font-weight:normal;font-family:'Liberation Sans',sans-serif;;-webkit-text-stroke:0.1px #1a1a1a">2.Revised subtotal amount display.</div>
<div class="t" style="right:570.40px;top:464.18px;font-size:4.9px;line-height:6.37px;color:#1a1a1a;font-weight:bold;">Sub Total</div>
<div class="t" style="right:524.30px;top:464.18px;font-size:4.9px;line-height:6.37px;color:#1a1a1a;font-weight:bold;">$446.00</div>
<div class="t" style="right:570.40px;top:470.18px;font-size:4.9px;line-height:6.37px;color:#1a1a1a;font-weight:normal;;-webkit-text-stroke:0.1px #1a1a1a">Discount (10%)</div>
<div class="t" style="right:524.30px;top:470.18px;font-size:4.9px;line-height:6.37px;color:#1a1a1a;font-weight:normal;;-webkit-text-stroke:0.1px #1a1a1a">$44.60</div>
<div class="t" style="right:570.40px;top:475.58px;font-size:4.9px;line-height:6.37px;color:#1a1a1a;font-weight:normal;;-webkit-text-stroke:0.1px #1a1a1a">Inline Discount</div>
<div class="t" style="right:524.30px;top:475.58px;font-size:4.9px;line-height:6.37px;color:#1a1a1a;font-weight:normal;;-webkit-text-stroke:0.1px #1a1a1a">$11.00</div>
<div class="t" style="right:570.40px;top:481.18px;font-size:4.9px;line-height:6.37px;color:#1a1a1a;font-weight:normal;;-webkit-text-stroke:0.1px #1a1a1a">Shipping Cost</div>
<div class="t" style="right:524.30px;top:481.18px;font-size:4.9px;line-height:6.37px;color:#1a1a1a;font-weight:normal;;-webkit-text-stroke:0.1px #1a1a1a">$100.00</div>
<div class="t" style="right:570.40px;top:486.58px;font-size:4.9px;line-height:6.37px;color:#1a1a1a;font-weight:normal;;-webkit-text-stroke:0.1px #1a1a1a">GST 5% on $270.00</div>
<div class="t" style="right:524.30px;top:486.58px;font-size:4.9px;line-height:6.37px;color:#1a1a1a;font-weight:normal;;-webkit-text-stroke:0.1px #1a1a1a">$13.50</div>
<div class="t" style="right:570.40px;top:493.98px;font-size:4.9px;line-height:6.37px;color:#1a1a1a;font-weight:bold;">Total</div>
<div class="t" style="right:524.30px;top:493.98px;font-size:4.9px;line-height:6.37px;color:#1a1a1a;font-weight:bold;">$517.60</div>
<div class="t" style="right:570.40px;top:498.98px;font-size:4.9px;line-height:6.37px;color:#1a1a1a;font-weight:bold;">Amount Paid</div>
<div class="t" style="right:524.30px;top:498.98px;font-size:4.9px;line-height:6.37px;color:#1a1a1a;font-weight:bold;">$100.00</div>
<div class="t" style="right:570.40px;top:504.98px;font-size:4.9px;line-height:6.37px;color:#1a1a1a;font-weight:bold;">Amount Due</div>
<div class="t" style="right:524.30px;top:504.98px;font-size:4.9px;line-height:6.37px;color:#1a1a1a;font-weight:bold;">$417.60</div>
<div class="t" style="right:524.30px;top:511.38px;font-size:4.9px;line-height:6.37px;color:#1a1a1a;font-weight:bold;">Total In Words</div>
<div class="t" style="right:524.30px;top:517.71px;font-size:4.85px;line-height:6.30px;color:#1a1a1a;font-weight:normal;;-webkit-text-stroke:0.1px #1a1a1a">Five Hundred Seventeen Dollars and Sixty Cents</div>
<svg style="left:360.1px;top:527.2px" width="32.6" height="33.2" viewBox="0 0 25 25" shape-rendering="crispEdges"><path d="M0 0h1v1h-1zM1 0h1v1h-1zM2 0h1v1h-1zM3 0h1v1h-1zM4 0h1v1h-1zM5 0h1v1h-1zM6 0h1v1h-1zM8 0h1v1h-1zM9 0h1v1h-1zM10 0h1v1h-1zM11 0h1v1h-1zM12 0h1v1h-1zM14 0h1v1h-1zM15 0h1v1h-1zM18 0h1v1h-1zM19 0h1v1h-1zM20 0h1v1h-1zM21 0h1v1h-1zM22 0h1v1h-1zM23 0h1v1h-1zM24 0h1v1h-1zM0 1h1v1h-1zM6 1h1v1h-1zM8 1h1v1h-1zM9 1h1v1h-1zM10 1h1v1h-1zM12 1h1v1h-1zM13 1h1v1h-1zM15 1h1v1h-1zM16 1h1v1h-1zM18 1h1v1h-1zM24 1h1v1h-1zM0 2h1v1h-1zM2 2h1v1h-1zM3 2h1v1h-1zM4 2h1v1h-1zM6 2h1v1h-1zM11 2h1v1h-1zM15 2h1v1h-1zM18 2h1v1h-1zM20 2h1v1h-1zM21 2h1v1h-1zM22 2h1v1h-1zM24 2h1v1h-1zM0 3h1v1h-1zM2 3h1v1h-1zM3 3h1v1h-1zM4 3h1v1h-1zM6 3h1v1h-1zM9 3h1v1h-1zM10 3h1v1h-1zM11 3h1v1h-1zM13 3h1v1h-1zM14 3h1v1h-1zM18 3h1v1h-1zM20 3h1v1h-1zM21 3h1v1h-1zM22 3h1v1h-1zM24 3h1v1h-1zM0 4h1v1h-1zM2 4h1v1h-1zM3 4h1v1h-1zM4 4h1v1h-1zM6 4h1v1h-1zM8 4h1v1h-1zM15 4h1v1h-1zM18 4h1v1h-1zM20 4h1v1h-1zM21 4h1v1h-1zM22 4h1v1h-1zM24 4h1v1h-1zM0 5h1v1h-1zM6 5h1v1h-1zM8 5h1v1h-1zM9 5h1v1h-1zM12 5h1v1h-1zM13 5h1v1h-1zM14 5h1v1h-1zM15 5h1v1h-1zM16 5h1v1h-1zM18 5h1v1h-1zM24 5h1v1h-1zM0 6h1v1h-1zM1 6h1v1h-1zM2 6h1v1h-1zM3 6h1v1h-1zM4 6h1v1h-1zM5 6h1v1h-1zM6 6h1v1h-1zM12 6h1v1h-1zM13 6h1v1h-1zM14 6h1v1h-1zM18 6h1v1h-1zM19 6h1v1h-1zM20 6h1v1h-1zM21 6h1v1h-1zM22 6h1v1h-1zM23 6h1v1h-1zM24 6h1v1h-1zM10 7h1v1h-1zM14 7h1v1h-1zM15 7h1v1h-1zM16 7h1v1h-1zM0 8h1v1h-1zM5 8h1v1h-1zM6 8h1v1h-1zM8 8h1v1h-1zM11 8h1v1h-1zM12 8h1v1h-1zM15 8h1v1h-1zM16 8h1v1h-1zM17 8h1v1h-1zM20 8h1v1h-1zM24 8h1v1h-1zM1 9h1v1h-1zM2 9h1v1h-1zM7 9h1v1h-1zM10 9h1v1h-1zM11 9h1v1h-1zM12 9h1v1h-1zM13 9h1v1h-1zM15 9h1v1h-1zM16 9h1v1h-1zM17 9h1v1h-1zM19 9h1v1h-1zM20 9h1v1h-1zM23 9h1v1h-1zM3 10h1v1h-1zM4 10h1v1h-1zM5 10h1v1h-1zM6 10h1v1h-1zM8 10h1v1h-1zM9 10h1v1h-1zM12 10h1v1h-1zM16 10h1v1h-1zM18 10h1v1h-1zM19 10h1v1h-1zM0 11h1v1h-1zM5 11h1v1h-1zM7 11h1v1h-1zM12 11h1v1h-1zM16 11h1v1h-1zM17 11h1v1h-1zM18 11h1v1h-1zM19 11h1v1h-1zM20 11h1v1h-1zM21 11h1v1h-1zM0 12h1v1h-1zM3 12h1v1h-1zM6 12h1v1h-1zM8 12h1v1h-1zM9 12h1v1h-1zM12 12h1v1h-1zM13 12h1v1h-1zM15 12h1v1h-1zM16 12h1v1h-1zM17 12h1v1h-1zM19 12h1v1h-1zM21 12h1v1h-1zM22 12h1v1h-1zM23 12h1v1h-1zM1 13h1v1h-1zM5 13h1v1h-1zM6 13h1v1h-1zM7 13h1v1h-1zM9 13h1v1h-1zM10 13h1v1h-1zM11 13h1v1h-1zM14 13h1v1h-1zM15 13h1v1h-1zM19 13h1v1h-1zM20 13h1v1h-1zM22 13h1v1h-1zM23 13h1v1h-1zM2 14h1v1h-1zM4 14h1v1h-1zM6 14h1v1h-1zM7 14h1v1h-1zM10 14h1v1h-1zM11 14h1v1h-1zM13 14h1v1h-1zM14 14h1v1h-1zM15 14h1v1h-1zM16 14h1v1h-1zM17 14h1v1h-1zM18 14h1v1h-1zM19 14h1v1h-1zM21 14h1v1h-1zM23 14h1v1h-1zM24 14h1v1h-1zM0 15h1v1h-1zM1 15h1v1h-1zM2 15h1v1h-1zM5 15h1v1h-1zM6 15h1v1h-1zM8 15h1v1h-1zM10 15h1v1h-1zM11 15h1v1h-1zM13 15h1v1h-1zM17 15h1v1h-1zM21 15h1v1h-1zM22 15h1v1h-1zM23 15h1v1h-1zM24 15h1v1h-1zM0 16h1v1h-1zM2 16h1v1h-1zM3 16h1v1h-1zM4 16h1v1h-1zM8 16h1v1h-1zM9 16h1v1h-1zM10 16h1v1h-1zM11 16h1v1h-1zM12 16h1v1h-1zM13 16h1v1h-1zM14 16h1v1h-1zM16 16h1v1h-1zM17 16h1v1h-1zM18 16h1v1h-1zM19 16h1v1h-1zM20 16h1v1h-1zM21 16h1v1h-1zM22 16h1v1h-1zM23 16h1v1h-1zM24 16h1v1h-1zM8 17h1v1h-1zM9 17h1v1h-1zM10 17h1v1h-1zM16 17h1v1h-1zM20 17h1v1h-1zM23 17h1v1h-1zM0 18h1v1h-1zM1 18h1v1h-1zM2 18h1v1h-1zM3 18h1v1h-1zM4 18h1v1h-1zM5 18h1v1h-1zM6 18h1v1h-1zM14 18h1v1h-1zM15 18h1v1h-1zM16 18h1v1h-1zM18 18h1v1h-1zM20 18h1v1h-1zM24 18h1v1h-1zM0 19h1v1h-1zM6 19h1v1h-1zM8 19h1v1h-1zM9 19h1v1h-1zM10 19h1v1h-1zM12 19h1v1h-1zM15 19h1v1h-1zM16 19h1v1h-1zM20 19h1v1h-1zM22 19h1v1h-1zM23 19h1v1h-1zM24 19h1v1h-1zM0 20h1v1h-1zM2 20h1v1h-1zM3 20h1v1h-1zM4 20h1v1h-1zM6 20h1v1h-1zM9 20h1v1h-1zM11 20h1v1h-1zM12 20h1v1h-1zM13 20h1v1h-1zM15 20h1v1h-1zM16 20h1v1h-1zM17 20h1v1h-1zM18 20h1v1h-1zM19 20h1v1h-1zM20 20h1v1h-1zM22 20h1v1h-1zM23 20h1v1h-1zM24 20h1v1h-1zM0 21h1v1h-1zM2 21h1v1h-1zM3 21h1v1h-1zM4 21h1v1h-1zM6 21h1v1h-1zM11 21h1v1h-1zM13 21h1v1h-1zM14 21h1v1h-1zM15 21h1v1h-1zM16 21h1v1h-1zM17 21h1v1h-1zM18 21h1v1h-1zM19 21h1v1h-1zM20 21h1v1h-1zM21 21h1v1h-1zM23 21h1v1h-1zM0 22h1v1h-1zM2 22h1v1h-1zM3 22h1v1h-1zM4 22h1v1h-1zM6 22h1v1h-1zM10 22h1v1h-1zM11 22h1v1h-1zM12 22h1v1h-1zM13 22h1v1h-1zM14 22h1v1h-1zM16 22h1v1h-1zM18 22h1v1h-1zM19 22h1v1h-1zM21 22h1v1h-1zM22 22h1v1h-1zM0 23h1v1h-1zM6 23h1v1h-1zM8 23h1v1h-1zM11 23h1v1h-1zM12 23h1v1h-1zM14 23h1v1h-1zM15 23h1v1h-1zM16 23h1v1h-1zM17 23h1v1h-1zM20 23h1v1h-1zM22 23h1v1h-1zM24 23h1v1h-1zM0 24h1v1h-1zM1 24h1v1h-1zM2 24h1v1h-1zM3 24h1v1h-1zM4 24h1v1h-1zM5 24h1v1h-1zM6 24h1v1h-1zM8 24h1v1h-1zM9 24h1v1h-1zM10 24h1v1h-1zM11 24h1v1h-1zM12 24h1v1h-1zM13 24h1v1h-1zM14 24h1v1h-1zM15 24h1v1h-1zM19 24h1v1h-1zM20 24h1v1h-1zM22 24h1v1h-1zM23 24h1v1h-1zM24 24h1v1h-1z" fill="#111"/></svg>
<div class="t" style="left:347.00px;top:568.87px;font-size:4.6px;line-height:5.98px;color:#777;font-weight:normal;font-family:'Liberation Sans',sans-serif;">Created by</div>
<div class="a" style="left:373.2px;top:569px;width:5.5px;height:4.5px;background:#1a6fe0;border-radius:1px 2px 0 0"></div>
<div class="t" style="left:379.50px;top:568.49px;font-size:5.2px;line-height:6.76px;color:#24306a;font-weight:bold;font-family:'Liberation Sans',sans-serif;"><span style="color:#3b82f0">moon</span>invoice</div>
<div class="a" style="left:165px;top:574px;width:428px;height:1px;background:#ffffff;"></div>
</body></html>
